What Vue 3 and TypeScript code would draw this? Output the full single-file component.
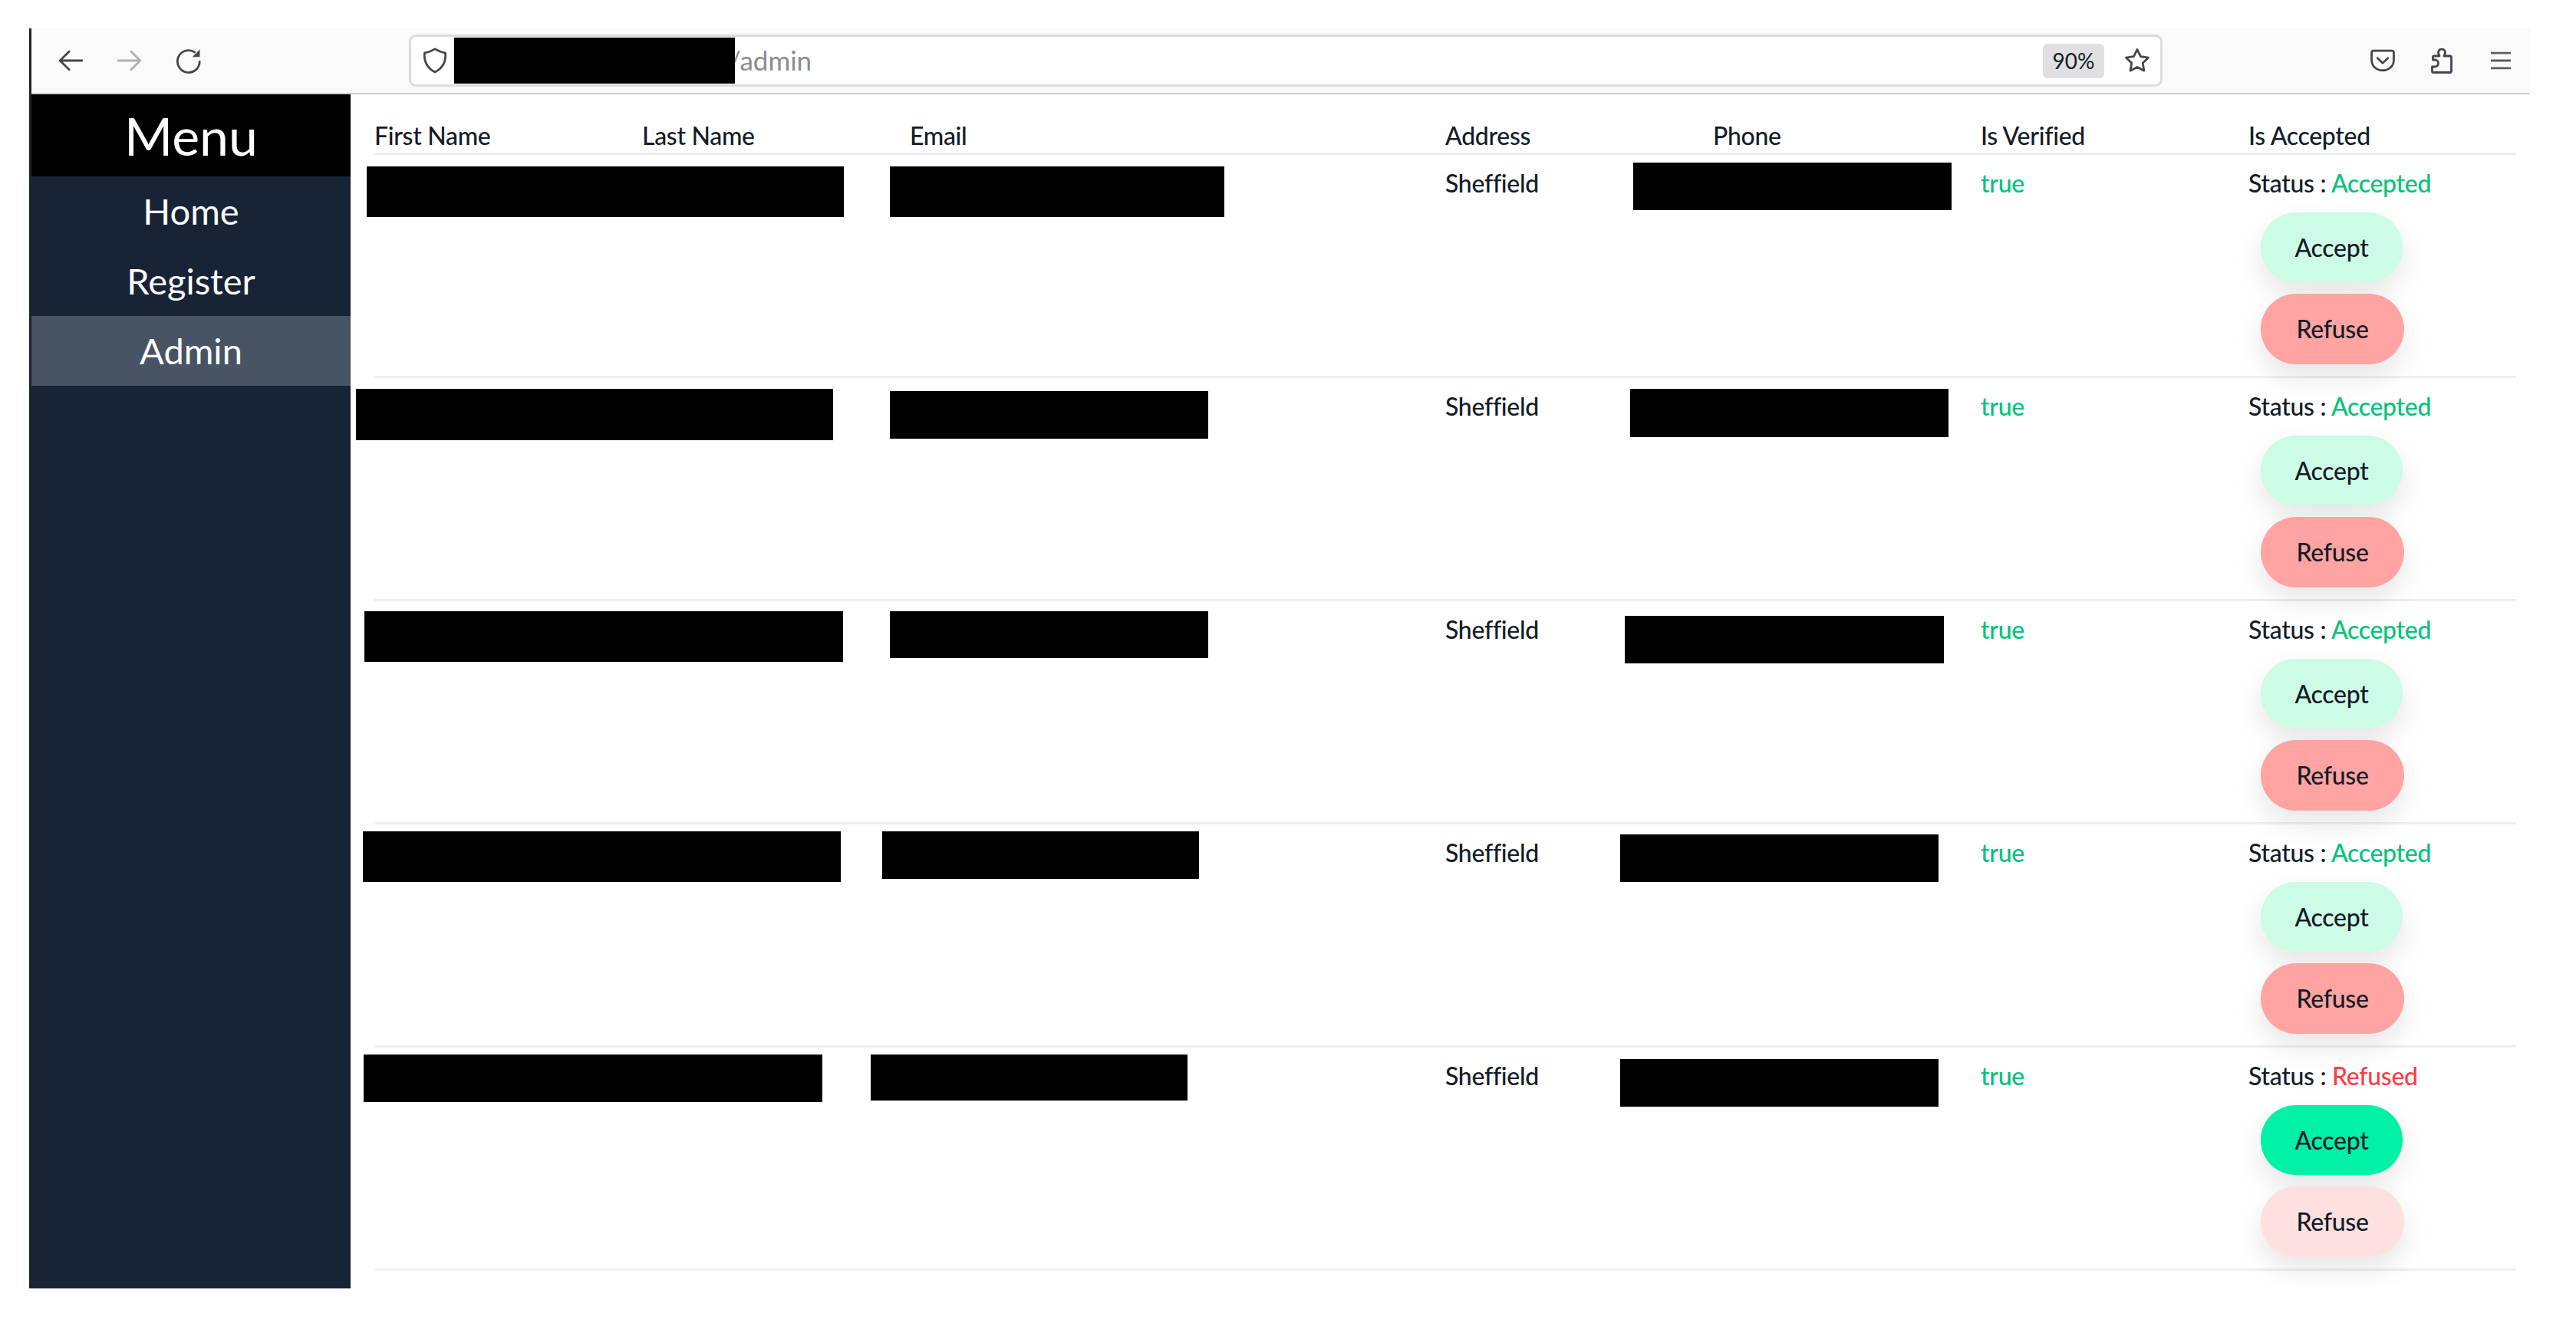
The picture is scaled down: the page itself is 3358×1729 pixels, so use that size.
<script setup lang="ts">
import { computed } from 'vue';

interface Person {
	status: 'Accepted' | 'Refused';
}

type Bar = [number, number, number, number];

const columns = ['First Name', 'Last Name', 'Email', 'Address', 'Phone', 'Is Verified', 'Is Accepted'];

const people: Person[] = [
	{ status: 'Accepted' },
	{ status: 'Accepted' },
	{ status: 'Accepted' },
	{ status: 'Accepted' },
	{ status: 'Refused' },
];

// blacked out bits of the screenshot: left, top, right, bottom in page pixels
const bars: Bar[] = [
	[478, 217, 1100, 283], [1160, 217, 1596, 283], [2129, 212, 2544, 274],
	[464, 507, 1086, 574], [1160, 510, 1575, 572], [2125, 507, 2540, 570],
	[475, 797, 1099, 863], [1160, 797, 1575, 858], [2118, 803, 2534, 865],
	[473, 1084, 1096, 1150], [1150, 1084, 1563, 1146], [2112, 1088, 2527, 1150],
	[474, 1375, 1072, 1437], [1135, 1375, 1548, 1435], [2112, 1381, 2527, 1443],
];

const barStyles = computed(() =>
	bars.map(([l, t, r, b]) => ({
		left: `${l - 457}px`,
		top: `${t - 123}px`,
		width: `${r - l}px`,
		height: `${b - t}px`,
	})),
);
</script>

<template>
	<div class="window">
		<header class="toolbar">
			<div class="nav-buttons">
				<button class="tool-btn">
					<svg viewBox="0 0 16 16" class="icon"><path d="M15 8H1.5M7.2 2.4L1.5 8l5.7 5.6" /></svg>
				</button>
				<button class="tool-btn disabled">
					<svg viewBox="0 0 16 16" class="icon"><path d="M1 8h13.5M8.8 2.4L14.5 8l-5.7 5.6" /></svg>
				</button>
				<button class="tool-btn">
					<svg viewBox="0 0 16 16" class="icon">
						<path d="M14.7 8.6A6.8 6.8 0 1 1 11.6 2.8" />
						<path class="solid" d="M14.8 1.2v4.6h-4.6z" />
					</svg>
				</button>
			</div>
			<div class="url-bar">
				<svg viewBox="0 0 16 16" class="icon shield">
					<path d="M8 .9C10 2.2 12.5 3 14.4 3.4 14.8 8.6 12.6 12.8 8 15.1 3.4 12.8 1.2 8.6 1.6 3.4 3.5 3 6 2.2 8 .9z" />
				</svg>
				<span class="url-redacted"></span>
				<span class="url-text">/admin</span>
				<span class="zoom-badge">90%</span>
				<svg viewBox="0 0 16 16" class="icon star">
					<path d="M8 1.2L10.1 5.5 14.8 6.2 11.4 9.5 12.2 14.2 8 12 3.8 14.2 4.6 9.5 1.2 6.2 5.9 5.5z" />
				</svg>
			</div>
			<div class="end-buttons">
				<button class="tool-btn">
					<svg viewBox="0 0 16 16" class="icon"><path d="M2.4 1.9h11.2a1.2 1.2 0 0 1 1.2 1.2v4.5c0 3.8-3 6.4-6.8 6.4s-6.8-2.6-6.8-6.4V3.1a1.2 1.2 0 0 1 1.2-1.2zM4.8 6.5L8 9.5l3.2-3" /></svg>
				</button>
				<button class="tool-btn">
					<svg viewBox="0 0 28 33" class="icon puzzle"><path d="M11 10C10 8 9.5 7 9.5 5.5a4.5 4.5 0 0 1 9 0C18.5 7 18 8 17 10h8a1.5 1.5 0 0 1 1.5 1.5V30a1.5 1.5 0 0 1-1.5 1.5H3A1.5 1.5 0 0 1 1.5 30v-6H5a4.5 4.5 0 0 0 0-9H2.5v-3.5A1.5 1.5 0 0 1 4 10z" /></svg>
				</button>
				<button class="tool-btn">
					<svg viewBox="0 0 16 16" class="icon burger"><path d="M1.9 3.4h12.2M1.9 8h12.2M1.9 12.6h12.2" /></svg>
				</button>
			</div>
		</header>

		<div class="page">
			<aside class="sidebar">
				<h1 class="menu-title">Menu</h1>
				<nav>
					<a class="nav-item">Home</a>
					<a class="nav-item">Register</a>
					<a class="nav-item active">Admin</a>
				</nav>
			</aside>

			<main class="content">
				<div class="table">
					<div class="row head">
						<div v-for="col in columns" :key="col" class="cell">{{ col }}</div>
					</div>
					<div v-for="(person, i) in people" :key="i" class="row">
						<div class="cell"></div>
						<div class="cell"></div>
						<div class="cell"></div>
						<div class="cell">Sheffield</div>
						<div class="cell"></div>
						<div class="cell verified">true</div>
						<div class="cell">
							<div class="status">
								Status :
								<span :class="person.status === 'Accepted' ? 'accepted' : 'refused'">{{ person.status }}</span>
							</div>
							<div class="actions">
								<button class="action accept" :class="{ on: person.status === 'Refused' }">Accept</button>
								<button class="action refuse" :class="{ on: person.status === 'Accepted' }">Refuse</button>
							</div>
						</div>
					</div>
				</div>
				<div v-for="(style, i) in barStyles" :key="i" class="redacted" :style="style"></div>
			</main>
		</div>
	</div>
</template>

<style>
html, body {
	background: #ffffff;
}
</style>

<style scoped>
.window {
	margin: 37px 0 0 38px;
	width: 3260px;
	height: 1643px;
	border-left: 3px solid #20232b;
	box-sizing: border-box;
	overflow: hidden;
	display: flex;
	flex-direction: column;
	font-family: Lato, "Open Sans", sans-serif;
	color: #141c26;
}

.toolbar {
	height: 86px;
	flex: none;
	box-sizing: border-box;
	background: #fafafb;
	border-bottom: 2px solid #cfcfd3;
	display: flex;
	align-items: center;
	padding-left: 12px;
}

.nav-buttons,
.end-buttons {
	display: flex;
	flex: none;
}

.tool-btn {
	width: 77px;
	height: 60px;
	padding: 0;
	border: none;
	background: transparent;
	display: flex;
	align-items: center;
	justify-content: center;
}

.icon {
	width: 34px;
	height: 34px;
	fill: none;
	stroke: #45454d;
	stroke-width: 1.3;
	stroke-linecap: round;
	stroke-linejoin: round;
}

.icon .solid {
	fill: #45454d;
	stroke: none;
}

.puzzle {
	width: 28px;
	height: 33px;
	stroke-width: 2.8;
}

.burger {
	stroke: #5c5c64;
	stroke-linecap: butt;
}

.disabled .icon {
	stroke: #b0b0b6;
}

.url-bar {
	margin-left: 249px;
	width: 2286px;
	height: 68px;
	flex: none;
	margin-right: auto;
	box-sizing: border-box;
	background: #ffffff;
	border: 3px solid #dcdcdf;
	border-radius: 9px;
	display: flex;
	align-items: center;
	padding-left: 14px;
	font-size: 35px;
}

.shield {
	flex: none;
}

.url-redacted {
	width: 366px;
	height: 60px;
	margin-left: 8px;
	background: #000000;
	position: relative;
	z-index: 1;
	flex: none;
}

.url-text {
	margin-left: -8px;
	padding-bottom: 2px;
	color: #8b8b92;
}

.zoom-badge {
	margin-left: auto;
	width: 80px;
	height: 45px;
	border-radius: 6px;
	background: #e0e0e2;
	font-size: 28px;
	display: flex;
	align-items: center;
	justify-content: center;
}

.star {
	margin: 0 13px 0 26px;
	flex: none;
}

.page {
	flex: 1;
	display: flex;
	min-height: 0;
}

.sidebar {
	width: 416px;
	flex: none;
	background: #162435;
	color: #ffffff;
	text-align: center;
}

.menu-title {
	margin: 0;
	height: 107px;
	background: #000000;
	font-size: 68px;
	font-weight: 400;
	line-height: 107px;
}

.nav-item {
	display: block;
	height: 91px;
	line-height: 91px;
	font-size: 47px;
}

.nav-item.active {
	background: #475464;
}

.content {
	flex: 1;
	position: relative;
	padding: 0 18px 0 31px;
	background: #ffffff;
}

.table {
	font-size: 32px;
	font-weight: 500;
	letter-spacing: -0.3px;
}

.row {
	display: grid;
	grid-template-columns: repeat(2, 349px) 698px repeat(4, 349px);
	height: 291px;
	box-sizing: border-box;
	border-bottom: 3px solid #eeeef0;
	padding-top: 17px;
	line-height: 40px;
}

.row.head {
	height: 79px;
	padding-top: 34px;
}

.verified,
.accepted {
	color: #00c47a;
}

.refused {
	color: #ff3a46;
}

.actions {
	margin: 18px 0 0 16px;
	display: flex;
	flex-direction: column;
	align-items: flex-start;
	gap: 15px;
}

.action {
	width: 185px;
	height: 91px;
	padding: 0;
	border: none;
	border-radius: 46px;
	font: inherit;
	letter-spacing: inherit;
	color: #141c26;
	box-shadow: 0 16px 36px rgba(0, 0, 0, 0.1);
}

.accept {
	background: #ccfbe6;
}

.accept.on {
	background: #00f0a5;
}

.refuse {
	width: 187px;
	height: 92px;
	background: #ffe0e0;
}

.refuse.on {
	background: #ffa3a3;
}

.redacted {
	position: absolute;
	background: #000000;
}
</style>
